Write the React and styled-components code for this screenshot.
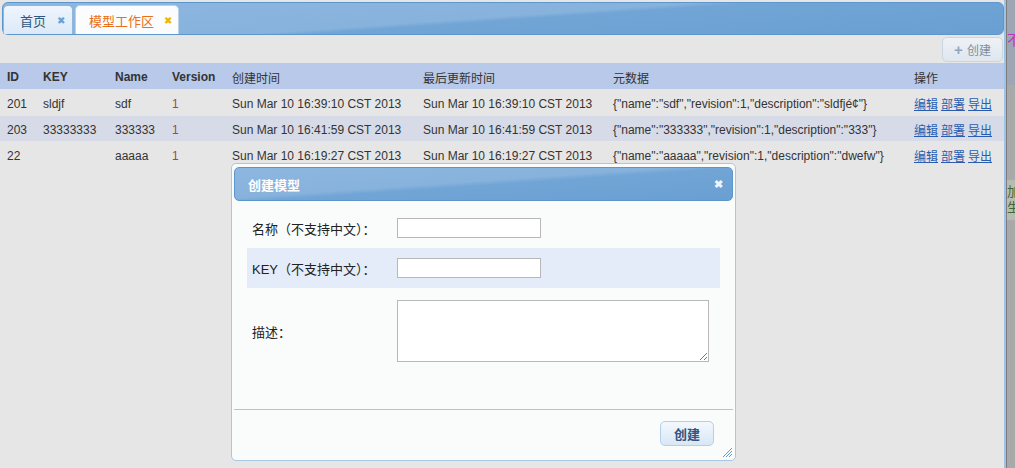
import styled, { createGlobalStyle } from "styled-components";

const GlobalStyle = createGlobalStyle`
  html, body {
    margin: 0;
    padding: 0;
    background: #e6e6e6;
    font-family: "Liberation Sans", "Noto Sans CJK SC", sans-serif;
    font-size: 12px;
    color: #333;
  }
`;

const rows = [
  { id: "201", key: "sldjf", name: "sdf", version: "1", created: "Sun Mar 10 16:39:10 CST 2013", updated: "Sun Mar 10 16:39:10 CST 2013", meta: '{"name":"sdf","revision":1,"description":"sldfjé¢"}' },
  { id: "203", key: "33333333", name: "333333", version: "1", created: "Sun Mar 10 16:41:59 CST 2013", updated: "Sun Mar 10 16:41:59 CST 2013", meta: '{"name":"333333","revision":1,"description":"333"}' },
  { id: "22", key: "", name: "aaaaa", version: "1", created: "Sun Mar 10 16:19:27 CST 2013", updated: "Sun Mar 10 16:19:27 CST 2013", meta: '{"name":"aaaaa","revision":1,"description":"dwefw"}' },
];

function App() {
  return (
    <>
      <GlobalStyle />
      <Page>
        <Main>
          <TabBar>
            <Tab>
              首页<TabClose>✖</TabClose>
            </Tab>
            <Tab $active>
              模型工作区<TabClose $active>✖</TabClose>
            </Tab>
          </TabBar>
          <Toolbar>
            <ToolButton>
              <Plus>+</Plus>创建
            </ToolButton>
          </Toolbar>
          <Grid>
            <colgroup>
              <col style={{ width: 36 }} />
              <col style={{ width: 72 }} />
              <col style={{ width: 57 }} />
              <col style={{ width: 60 }} />
              <col style={{ width: 191 }} />
              <col style={{ width: 190 }} />
              <col style={{ width: 301 }} />
              <col />
            </colgroup>
            <thead>
              <tr>
                <Th $bold>ID</Th>
                <Th $bold>KEY</Th>
                <Th $bold>Name</Th>
                <Th $bold>Version</Th>
                <Th>创建时间</Th>
                <Th>最后更新时间</Th>
                <Th>元数据</Th>
                <Th>操作</Th>
              </tr>
            </thead>
            <tbody>
              {rows.map((r, i) => (
                <Tr key={r.id} $alt={i % 2 === 1}>
                  <Td>{r.id}</Td>
                  <Td>{r.key}</Td>
                  <Td>{r.name}</Td>
                  <Td $red>{r.version}</Td>
                  <Td>{r.created}</Td>
                  <Td>{r.updated}</Td>
                  <Td>{r.meta}</Td>
                  <Td>
                    <Actions>
                      <ActionLink>编辑</ActionLink>
                      <ActionLink>部署</ActionLink>
                      <ActionLink>导出</ActionLink>
                    </Actions>
                  </Td>
                </Tr>
              ))}
            </tbody>
          </Grid>

          <Dialog>
            <DialogHeader>
              <span>创建模型</span>
              <DialogClose>✖</DialogClose>
            </DialogHeader>
            <DialogBody>
              <FormRow>
                <Label>名称（不支持中文）：</Label>
                <Input />
              </FormRow>
              <FormRow $alt>
                <Label>KEY（不支持中文）：</Label>
                <Input />
              </FormRow>
              <FormRow $tall>
                <Label>描述：</Label>
                <TextArea />
              </FormRow>
            </DialogBody>
            <DialogFooter>
              <SubmitButton>创建</SubmitButton>
            </DialogFooter>
            <Grip width="11" height="11" viewBox="0 0 11 11">
              <path d="M10 1 L1 10 M10 4 L4 10 M10 7 L7 10" stroke="#5a9ad8" strokeWidth="1" />
            </Grip>
          </Dialog>
        </Main>
        <SideStrip>
          <SideTop>不</SideTop>
          <SideBox>
            <span>加</span>
            <span>生</span>
          </SideBox>
        </SideStrip>
      </Page>
    </>
  );
}

const Page = styled.div`
  display: flex;
  width: 1015px;
  height: 468px;
  overflow: hidden;
`;

const Main = styled.div`
  position: relative;
  width: 1006px;
  flex: none;
  padding-top: 2px;
  border-right: 2px solid #9fc3e6;
  box-sizing: border-box;
  background: #e6e6e6;
`;

const TabBar = styled.div`
  display: flex;
  align-items: flex-end;
  gap: 2px;
  height: 33px;
  margin: 0 0 0 2px;
  width: 1002px;
  box-sizing: border-box;
  padding-left: 0;
  border: 1px solid #5d95cd;
  border-radius: 6px;
  background: linear-gradient(176deg, #8db7e0 0%, #87b2dc 48%, #71a5d6 52%, #6a9fd2 100%);
`;

const Tab = styled.div`
  display: flex;
  align-items: center;
  justify-content: space-between;
  height: 29px;
  width: ${(p) => (p.$active ? "104px" : "70px")};
  box-sizing: border-box;
  padding: 0 ${(p) => (p.$active ? "6px" : "7px")} 0 ${(p) => (p.$active ? "13px" : "16px")};
  border: 1px solid ${(p) => (p.$active ? "#b9d2ea" : "#90b6dc")};
  border-bottom: none;
  border-radius: 5px 5px 0 0;
  background: ${(p) => (p.$active ? "#fafcfd" : "linear-gradient(#eef5fd, #dce9f7)")};
  color: ${(p) => (p.$active ? "#e8701a" : "#30577f")};
  font-size: 13px;
`;

const TabClose = styled.span`
  font-size: 10px;
  color: ${(p) => (p.$active ? "#f2b400" : "#6b9fd3")};
`;

const Toolbar = styled.div`
  display: flex;
  justify-content: flex-end;
  height: 28px;
  padding: 2px 1px 0 0;
  box-sizing: border-box;
`;

const ToolButton = styled.div`
  display: flex;
  align-items: center;
  justify-content: center;
  gap: 4px;
  width: 61px;
  height: 25px;
  box-sizing: border-box;
  border: 1px solid #c9d6e2;
  border-radius: 5px;
  background: linear-gradient(#eef2f6, #dfe6ee);
  color: #7f8fa0;
  font-size: 12px;
`;

const Plus = styled.span`
  font-size: 15px;
  font-weight: bold;
  color: #8fa6bf;
`;

const Grid = styled.table`
  width: 1004px;
  border-collapse: collapse;
  table-layout: fixed;
  margin-left: 0;
`;

const Th = styled.th`
  height: 24px;
  padding: 2px 0 0 7px;
  text-align: left;
  background: #b9c9e9;
  font-weight: ${(p) => (p.$bold ? "bold" : "normal")};
  color: #333;
  white-space: nowrap;
`;

const Tr = styled.tr`
  background: ${(p) => (p.$alt ? "#d6dbe7" : "#e6e6e6")};
  border-top: 1px solid #e6e6e6;
`;

const Td = styled.td`
  height: 23px;
  padding: 2px 0 0 7px;
  white-space: nowrap;
  overflow: hidden;
  color: ${(p) => (p.$red ? "#a8482e" : "#333")};
`;

const Actions = styled.div`
  display: flex;
  gap: 3px;
`;

const ActionLink = styled.a`
  color: #2a5db0;
  text-decoration: underline;
  cursor: pointer;
`;

const Dialog = styled.div`
  position: absolute;
  left: 231px;
  top: 163px;
  width: 505px;
  height: 298px;
  box-sizing: border-box;
  padding: 3px 2px 0;
  border: 1px solid #a9c6e2;
  border-radius: 5px;
  background: #fafcfc;
  display: flex;
  flex-direction: column;
`;

const DialogHeader = styled.div`
  display: flex;
  align-items: center;
  justify-content: space-between;
  height: 34px;
  box-sizing: border-box;
  padding: 0 9px 0 13px;
  border: 1px solid #5d95cd;
  border-radius: 5px;
  background: linear-gradient(176deg, #8db7e0 0%, #87b2dc 45%, #71a5d6 52%, #6a9fd2 100%);
  color: #fff;
  font-weight: bold;
  font-size: 13px;
`;

const DialogClose = styled.span`
  font-size: 11px;
  color: #eef4fb;
`;

const DialogBody = styled.div`
  padding: 7px 13px 35px;
  border-bottom: 1px solid #a9c6e2;
`;

const FormRow = styled.div`
  display: grid;
  grid-template-columns: 145px 1fr;
  align-items: center;
  height: ${(p) => (p.$tall ? "86px" : "40px")};
  padding-left: 5px;
  background: ${(p) => (p.$alt ? "#e4ecfa" : "transparent")};
  font-size: 13px;
  color: #222;
`;

const Label = styled.span`
  white-space: nowrap;
`;

const Input = styled.div`
  width: 144px;
  height: 20px;
  box-sizing: border-box;
  border: 1px solid #b8b8b8;
  background: #fff;
`;

const TextArea = styled.div`
  position: relative;
  width: 312px;
  height: 62px;
  box-sizing: border-box;
  border: 1px solid #b8b8b8;
  background: #fff;
  &::after {
    content: "";
    position: absolute;
    right: 1px;
    bottom: 1px;
    width: 7px;
    height: 7px;
    background: linear-gradient(135deg, transparent 45%, #777 45%, #777 55%, transparent 55%, transparent 75%, #777 75%, #777 85%, transparent 85%);
  }
`;

const DialogFooter = styled.div`
  display: flex;
  justify-content: flex-end;
  padding: 11px 19px 0 0;
`;

const SubmitButton = styled.div`
  display: flex;
  align-items: center;
  justify-content: center;
  width: 54px;
  height: 25px;
  box-sizing: border-box;
  border: 1px solid #b5cfe9;
  border-radius: 5px;
  background: linear-gradient(#f3f8fd, #d8e7f6);
  color: #2f5583;
  font-size: 13px;
  font-weight: bold;
`;

const Grip = styled.svg`
  position: absolute;
  right: 2px;
  bottom: 2px;
`;

const SideStrip = styled.div`
  flex: 1;
  display: flex;
  flex-direction: column;
  border-left: 1px solid #7d7d7d;
  background: #a9a9a9;
  overflow: hidden;
`;

const SideTop = styled.div`
  height: 85px;
  background: #9ea5b3;
  color: #c030c0;
  font-size: 14px;
  padding-top: 33px;
  box-sizing: border-box;
  line-height: 14px;
`;

const SideBox = styled.div`
  margin-top: 95px;
  height: 40px;
  display: flex;
  flex-direction: column;
  background: #b8bcb0;
  font-size: 13px;
  line-height: 16px;
  padding-top: 4px;
  box-sizing: border-box;
  color: #3a6a3a;
`;

export default App;
